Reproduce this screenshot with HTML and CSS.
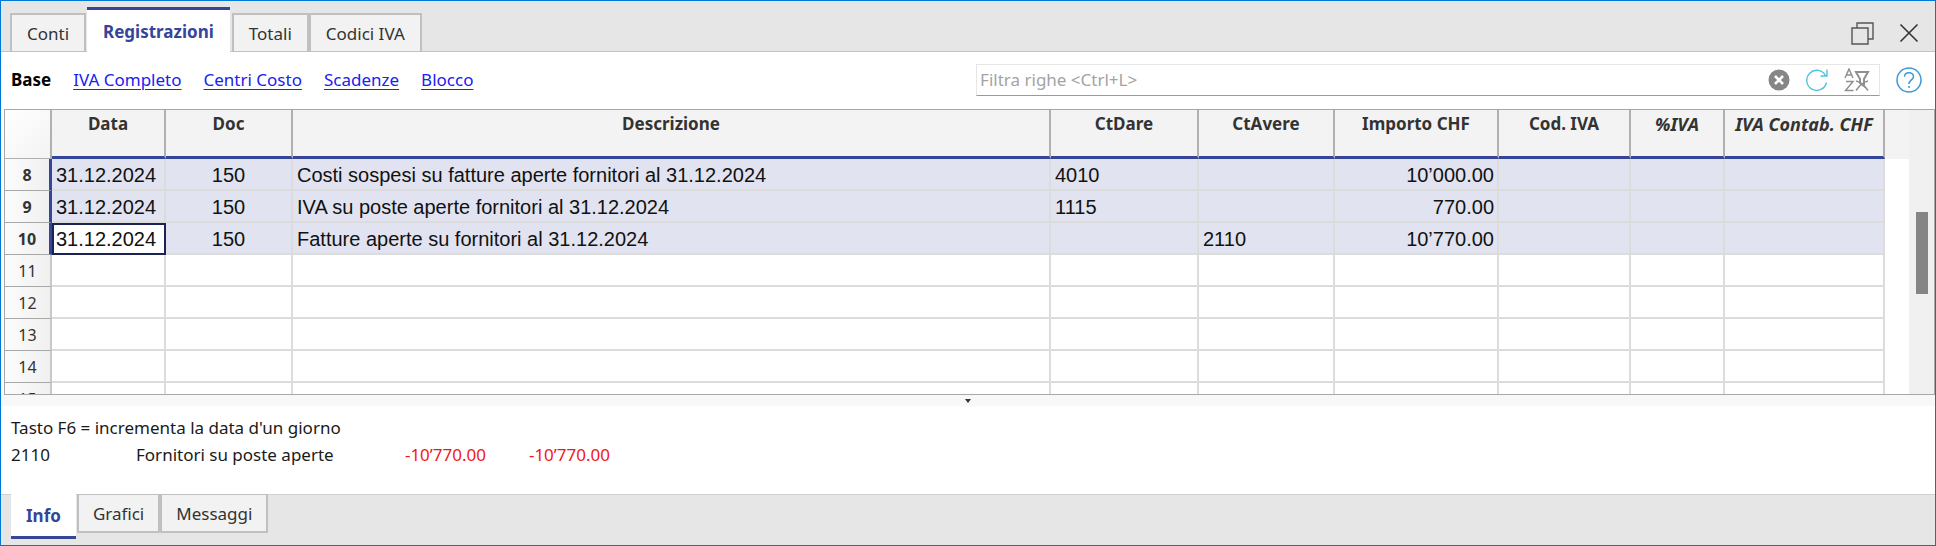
FILE: index.html
```html
<!DOCTYPE html>
<html lang="it">
<head>
<meta charset="utf-8">
<title>Registrazioni</title>
<link rel="stylesheet" href="styles.css">
</head>
<body>
<main class="window">
  <header class="strip strip-top">
    <nav class="tabs" aria-label="Tabelle">
      <button class="tab" type="button">Conti</button>
      <button class="tab active" type="button">Registrazioni</button>
      <button class="tab" type="button">Totali</button>
      <button class="tab" type="button">Codici IVA</button>
    </nav>
    <div class="window-buttons">
      <button class="icon-button" type="button" aria-label="Ripristina">
        <svg width="24" height="24" viewBox="0 0 24 24" fill="none" stroke="#555" stroke-width="1.4"><path d="M1 7H17V23H1ZM6 7V2H22V18H17"/></svg>
      </button>
      <button class="icon-button" type="button" aria-label="Chiudi">
        <svg width="20" height="20" viewBox="0 0 20 20" fill="none" stroke="#333" stroke-width="1.6"><path d="M1.500 1.500L18.500 18.500M18.500 1.500L1.500 18.500"/></svg>
      </button>
    </div>
  </header>

  <section class="toolbar">
    <nav class="views" aria-label="Viste">
      <strong>Base</strong>
      <a href="#iva">IVA Completo</a>
      <a href="#centri">Centri Costo</a>
      <a href="#scadenze">Scadenze</a>
      <a href="#blocco">Blocco</a>
    </nav>
    <div class="filter">
      <input class="filter-input" type="text" aria-label="Filtra righe" placeholder="Filtra righe &lt;Ctrl+L&gt;">
      <button class="icon-button" type="button" aria-label="Cancella filtro">
        <svg width="22" height="22" viewBox="0 0 22 22"><circle cx="11" cy="11" r="10.500" fill="#868686"/><path d="M7 7L15 15M15 7L7 15" stroke="#fff" stroke-width="2.600" fill="none"/></svg>
      </button>
      <button class="icon-button" type="button" aria-label="Aggiorna">
        <svg width="22" height="22" viewBox="0 0 22 22" fill="none" stroke="#4fc3dc" stroke-width="1.4"><path d="M20.500 13.500A10 10 0 1 1 19.500 6.500M21 0.500V7H14.500"/></svg>
      </button>
      <button class="icon-button" type="button" aria-label="Rimuovi ordinamento e filtro">
        <svg width="26" height="24" viewBox="0 0 26 24" fill="none" stroke="#909090" stroke-width="1.5"><path d="M1 10L5 1L9 10M2.500 7H7.500M2 13.500H9L1.500 22.500H9.500"/><path d="M12 4H24L20 11V18L16 15V11Z" stroke-width="2"/><path d="M12 13C17 14 21 18 24 22.500M24 13C19 14 15 18 12 22.500"/></svg>
      </button>
    </div>
    <button class="icon-button" type="button" aria-label="Aiuto">
      <svg width="26" height="26" viewBox="0 0 26 26" fill="none" stroke="#3d9ad6" stroke-width="1.5"><circle cx="13" cy="13" r="12"/><path d="M8.500 9.800C8.500 4.500 17.500 4.500 17.500 9.500C17.500 13 13 12.800 13 17M13 19V21"/></svg>
    </button>
  </section>

  <section class="grid">
    <div class="grid-view">
      <table class="entries">
        <colgroup>
          <col class="c-num"><col class="c-date"><col class="c-doc"><col><col class="c-debit"><col class="c-credit"><col class="c-amount"><col class="c-vat"><col class="c-rate"><col class="c-vatamount">
        </colgroup>
        <thead>
          <tr><td class="corner"></td><th scope="col">Data</th><th scope="col">Doc</th><th scope="col">Descrizione</th><th scope="col">CtDare</th><th scope="col">CtAvere</th><th scope="col">Importo CHF</th><th scope="col">Cod. IVA</th><th scope="col" class="computed">%IVA</th><th scope="col" class="computed">IVA Contab. CHF</th></tr>
        </thead>
        <tbody>
          <tr class="selected"><th scope="row">8</th><td>31.12.2024</td><td class="center">150</td><td>Costi sospesi su fatture aperte fornitori al 31.12.2024</td><td>4010</td><td></td><td class="amount">10’000.00</td><td></td><td></td><td></td></tr>
          <tr class="selected"><th scope="row">9</th><td>31.12.2024</td><td class="center">150</td><td>IVA su poste aperte fornitori al 31.12.2024</td><td>1115</td><td></td><td class="amount">770.00</td><td></td><td></td><td></td></tr>
          <tr class="selected"><th scope="row">10</th><td class="current">31.12.2024</td><td class="center">150</td><td>Fatture aperte su fornitori al 31.12.2024</td><td></td><td>2110</td><td class="amount">10’770.00</td><td></td><td></td><td></td></tr>
          <tr><th scope="row">11</th><td></td><td></td><td></td><td></td><td></td><td></td><td></td><td></td><td></td></tr>
          <tr><th scope="row">12</th><td></td><td></td><td></td><td></td><td></td><td></td><td></td><td></td><td></td></tr>
          <tr><th scope="row">13</th><td></td><td></td><td></td><td></td><td></td><td></td><td></td><td></td><td></td></tr>
          <tr><th scope="row">14</th><td></td><td></td><td></td><td></td><td></td><td></td><td></td><td></td><td></td></tr>
          <tr><th scope="row">15</th><td></td><td></td><td></td><td></td><td></td><td></td><td></td><td></td><td></td></tr>
        </tbody>
      </table>
    </div>
    <div class="gutter"></div>
    <div class="scrollbar"><div class="thumb"></div></div>
  </section>

  <div class="splitter"><svg width="6" height="4" viewBox="0 0 6 4"><path d="M0 0H6L3 4Z" fill="#333"/></svg></div>

  <section class="info">
    <p>Tasto F6 = incrementa la data d'un giorno</p>
    <div class="account"><span>2110</span><span>Fornitori su poste aperte</span><span class="negative">-10’770.00</span><span class="negative">-10’770.00</span></div>
  </section>

  <footer class="strip strip-bottom">
    <nav class="tabs" aria-label="Pannelli">
      <button class="tab active" type="button">Info</button>
      <button class="tab" type="button">Grafici</button>
      <button class="tab" type="button">Messaggi</button>
    </nav>
  </footer>
</main>
</body>
</html>
```
FILE: styles.css
```css
* { box-sizing: border-box; }

body {
  margin: 0;
  font-family: "Noto Sans", "Open Sans", sans-serif;
  font-size: 17px;
  line-height: 24px;
  color: #1a1a1a;
}

button, input { font: inherit; color: inherit; }

.window {
  display: flex;
  flex-direction: column;
  height: 100vh;
  border: 1px solid #0078d7;
  background: #fff;
}

/* Tab strips */
.strip { display: flex; background: #e6e6e6; }
.strip-top {
  justify-content: space-between;
  height: 51px;
  padding: 0 16px 0 9px;
  box-shadow: inset 0 -1px #c4c4c4;
}
.strip-bottom {
  height: 51px;
  padding-left: 10px;
  box-shadow: inset 0 1px #d0d0d0;
}
.tabs { display: flex; align-items: flex-end; }
.strip-bottom .tabs { align-items: flex-start; }
.tab {
  height: 39px;
  padding: 2px 15px 0;
  border: 2px solid #c0c0c0;
  border-bottom-width: 1px;
  background: #f2f2f2;
  color: #333;
}
.tab.active {
  height: 45px;
  padding: 2px 16px 0;
  border: 0 solid #34459a;
  border-top-width: 3px;
  margin: 0 2px 0 1px;
  background: #fff;
  color: #34459a;
  font-weight: 700;
}
.strip-bottom .tab { border-width: 1px 2px 2px; padding: 2px 14px 0; }
.strip-bottom .tab.active {
  margin: 0 1px 0 0;
  padding: 2px 15px 0;
  border-width: 0 0 3px;
}

.icon-button {
  display: flex;
  padding: 0;
  border: 0;
  background: none;
}
.window-buttons { display: flex; align-items: center; gap: 24px; padding-top: 12px; }

/* View links and row filter */
.toolbar {
  display: flex;
  align-items: center;
  gap: 16px;
  height: 57px;
  padding: 0 13px 2px 10px;
}
.views { display: flex; flex: 1; gap: 22px; }
.views strong { color: #000; }
.views a { color: #2020f0; text-decoration-thickness: 1px; text-underline-offset: 3px; }
.filter {
  display: flex;
  flex: 0 0 47.3%;
  align-items: center;
  gap: 16px;
  height: 32px;
  padding-right: 9px;
  border: 1px solid #e6e6e6;
  border-bottom: 1px solid #9a9a9a;
}
.filter-input {
  flex: 1;
  min-width: 0;
  padding: 0 3px;
  border: 0;
  outline: 0;
  background: none;
}
.filter-input::placeholder { color: #a3a3a3; opacity: 1; }

/* Entries */
.grid {
  display: flex;
  flex: 1;
  min-height: 0;
  margin-left: 3px;
  border: 1px solid #a8a8a8;
  overflow: hidden;
}
.grid-view { flex: 1; overflow: hidden; }
.gutter { width: 24px; background: linear-gradient(#f3f3f3 49px, #fff 49px); }
.scrollbar { width: 25px; padding: 102px 6px 0 7px; background: #f0f0f0; }
.thumb { height: 82px; background: #858585; }

.entries {
  width: 100%;
  border-collapse: separate;
  border-spacing: 0;
  table-layout: fixed;
  font-family: "Liberation Sans", Arial, sans-serif;
  font-size: 20px;
  color: #111;
}
.c-num { width: 47px; }
.c-date { width: 114px; }
.c-doc { width: 127px; }
.c-debit { width: 148px; }
.c-credit { width: 136px; }
.c-amount { width: 164px; }
.c-vat { width: 132px; }
.c-rate { width: 94px; }
.c-vatamount { width: 160px; }

.entries th {
  font-family: "Noto Sans", "Open Sans", sans-serif;
  font-size: 16px;
  color: #333;
  white-space: nowrap;
}
.entries thead th, .corner {
  height: 49px;
  padding: 2px 0 0;
  border-right: 2px solid #b0b0b0;
  border-bottom: 3px solid #34459a;
  background: #f3f3f3;
  font-size: 17px;
  vertical-align: top;
}
.entries .corner {
  border-bottom: 1px solid #b0b0b0;
  background: linear-gradient(135deg, #fff, #f3f3f3);
}
.entries thead .computed { font-size: 18px; font-style: italic; }
.entries tbody td {
  height: 32px;
  padding: 2px 4px 0;
  border-right: 2px solid #dcdcdc;
  border-bottom: 2px solid #dcdcdc;
  white-space: nowrap;
}
.entries tbody th {
  padding: 0;
  border-right: 2px solid #c8c8c8;
  border-bottom: 1px solid #a8a8a8;
  background: linear-gradient(90deg, #fcfcfc, #f0f0f0);
  font-weight: 400;
}
.entries .selected th { border-right: 3px solid #34459a; font-weight: 700; }
.entries .selected td { background: #e1e3f0; }
.entries .selected .current { background: #fff; outline: 2px solid #1c2352; outline-offset: -2px; }
.entries .center { text-align: center; }
.entries .amount { padding-right: 3px; text-align: right; }

.splitter {
  display: flex;
  align-items: center;
  justify-content: center;
  height: 11px;
  background: #f8f8f8;
}

/* Account information */
.info { height: 88px; padding: 8px 10px 0; line-height: 27px; }
.info p { margin: 0; }
.account { display: grid; grid-template-columns: 125px 228px 122px 124px; }
.negative { color: #f01818; text-align: right; }
```
